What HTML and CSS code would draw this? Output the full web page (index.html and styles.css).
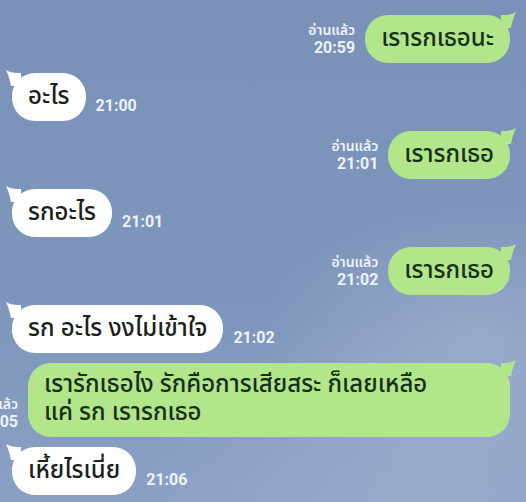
FILE: index.html
```html
<!DOCTYPE html>
<html lang="th">
<head>
    <meta charset="UTF-8">
    <meta name="viewport" content="width=device-width, initial-scale=1.0">
    <title>Chat</title>
    <link rel="stylesheet" href="styles.css">
</head>
<body>
    <div class="chat">
        <div class="row mine">
            <div class="read"><span>อ่านแล้ว</span><span class="read-time">20:59</span></div>
            <div class="bubble green">เรารกเธอนะ
                <svg class="tail tail-right" viewBox="0 0 16 16"><path d="M0 3 Q10 3.5 15 0 Q12 6 10 16 L0 16 Z"/></svg>
            </div>
        </div>

        <div class="row theirs">
            <div class="bubble white">อะไร
                <svg class="tail tail-left" viewBox="0 0 16 16"><path d="M16 3 Q6 3.5 1 0 Q4 6 6 16 L16 16 Z"/></svg>
            </div>
            <span class="time">21:00</span>
        </div>

        <div class="row mine">
            <div class="read"><span>อ่านแล้ว</span><span class="read-time">21:01</span></div>
            <div class="bubble green">เรารกเธอ
                <svg class="tail tail-right" viewBox="0 0 16 16"><path d="M0 3 Q10 3.5 15 0 Q12 6 10 16 L0 16 Z"/></svg>
            </div>
        </div>

        <div class="row theirs">
            <div class="bubble white">รกอะไร
                <svg class="tail tail-left" viewBox="0 0 16 16"><path d="M16 3 Q6 3.5 1 0 Q4 6 6 16 L16 16 Z"/></svg>
            </div>
            <span class="time">21:01</span>
        </div>

        <div class="row mine">
            <div class="read"><span>อ่านแล้ว</span><span class="read-time">21:02</span></div>
            <div class="bubble green">เรารกเธอ
                <svg class="tail tail-right" viewBox="0 0 16 16"><path d="M0 3 Q10 3.5 15 0 Q12 6 10 16 L0 16 Z"/></svg>
            </div>
        </div>

        <div class="row theirs">
            <div class="bubble white">รก อะไร งงไม่เข้าใจ
                <svg class="tail tail-left" viewBox="0 0 16 16"><path d="M16 3 Q6 3.5 1 0 Q4 6 6 16 L16 16 Z"/></svg>
            </div>
            <span class="time">21:02</span>
        </div>

        <!-- long message pushes the read label off the left edge -->
        <div class="row mine">
            <div class="read"><span>อ่านแล้ว</span><span class="read-time">21:05</span></div>
            <div class="bubble green wide">เรารักเธอไง รักคือการเสียสระ ก็เลยเหลือ<br>แค่ รก เรารกเธอ
                <svg class="tail tail-right" viewBox="0 0 16 16"><path d="M0 3 Q10 3.5 15 0 Q12 6 10 16 L0 16 Z"/></svg>
            </div>
        </div>

        <div class="row theirs">
            <div class="bubble white">เหี้ยไรเนี่ย
                <svg class="tail tail-left" viewBox="0 0 16 16"><path d="M16 3 Q6 3.5 1 0 Q4 6 6 16 L16 16 Z"/></svg>
            </div>
            <span class="time">21:06</span>
        </div>
    </div>
</body>
</html>
```

FILE: styles.css
```css
* {
    margin: 0;
    padding: 0;
    box-sizing: border-box;
}

body {
    width: 526px;
    height: 502px;
    overflow: hidden;
    font-family: 'Noto Sans Thai', 'Noto Sans', 'DejaVu Sans', sans-serif;
    background:
        radial-gradient(ellipse 220px 140px at 480px 340px, rgba(176, 192, 220, 0.45), transparent),
        radial-gradient(ellipse 280px 170px at 430px 480px, rgba(170, 188, 218, 0.45), transparent),
        linear-gradient(180deg, #7a92b8 0%, #7e96bb 60%, #8aa0c4 100%);
}

.chat {
    display: flex;
    flex-direction: column;
    gap: 10px;
    padding: 15px 16px 0 12px;
}

.row {
    display: flex;
    align-items: flex-end;
    gap: 10px;
}

.mine {
    justify-content: flex-end;
}

.bubble {
    position: relative;
    flex-shrink: 0;
    padding: 10px 16px;
    border-radius: 23px;
    font-size: 24px;
    font-weight: 500;
    line-height: 28px;
    color: #1c1f1c;
}

.green {
    background: #b3e68b;
    color: #17301c;
}

.white {
    background: #ffffff;
}

.wide {
    width: 482px;
    padding-top: 8px;
}

.tail {
    position: absolute;
    top: -3px;
    width: 16px;
    height: 16px;
}

.tail-right {
    right: -7px;
}

.tail-left {
    left: -7px;
}

.green .tail path {
    fill: #b3e68b;
}

.white .tail path {
    fill: #ffffff;
}

.read {
    flex-shrink: 0;
    display: flex;
    flex-direction: column;
    align-items: flex-end;
    margin-bottom: 7px;
    color: #eef2f9;
    font-size: 14px;
    font-weight: 600;
    line-height: 17px;
}

.read-time,
.time {
    font-family: Roboto, 'Liberation Sans', sans-serif;
    font-weight: bold;
    font-size: 16px;
}

.time {
    flex-shrink: 0;
    color: #eef2f9;
    margin-bottom: 6px;
}
```
